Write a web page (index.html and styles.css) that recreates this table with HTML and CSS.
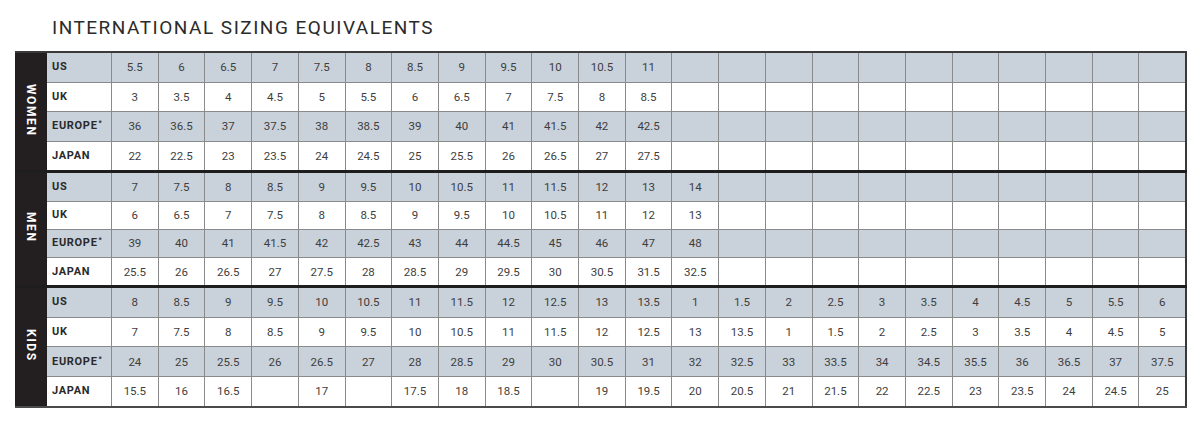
FILE: index.html
```html
<!DOCTYPE html>
<html>
<head>
<meta charset="utf-8">
<link rel="stylesheet" href="styles.css">
</head>
<body>
<h1 class="title">INTERNATIONAL SIZING EQUIVALENTS</h1>
<table class="chart">
<colgroup>
<col class="c-grp"><col class="c-lbl">
<col><col><col><col><col><col><col><col><col><col><col><col><col><col><col><col><col><col><col><col><col><col><col>
</colgroup>
<tbody class="grp women">
<tr class="g"><th class="side" rowspan="4"><span>WOMEN</span></th><th class="lbl">US</th><td>5.5</td><td>6</td><td>6.5</td><td>7</td><td>7.5</td><td>8</td><td>8.5</td><td>9</td><td>9.5</td><td>10</td><td>10.5</td><td>11</td><td></td><td></td><td></td><td></td><td></td><td></td><td></td><td></td><td></td><td></td><td></td></tr>
<tr><th class="lbl">UK</th><td>3</td><td>3.5</td><td>4</td><td>4.5</td><td>5</td><td>5.5</td><td>6</td><td>6.5</td><td>7</td><td>7.5</td><td>8</td><td>8.5</td><td></td><td></td><td></td><td></td><td></td><td></td><td></td><td></td><td></td><td></td><td></td></tr>
<tr class="g"><th class="lbl">EUROPE<sup>*</sup></th><td>36</td><td>36.5</td><td>37</td><td>37.5</td><td>38</td><td>38.5</td><td>39</td><td>40</td><td>41</td><td>41.5</td><td>42</td><td>42.5</td><td></td><td></td><td></td><td></td><td></td><td></td><td></td><td></td><td></td><td></td><td></td></tr>
<tr><th class="lbl">JAPAN</th><td>22</td><td>22.5</td><td>23</td><td>23.5</td><td>24</td><td>24.5</td><td>25</td><td>25.5</td><td>26</td><td>26.5</td><td>27</td><td>27.5</td><td></td><td></td><td></td><td></td><td></td><td></td><td></td><td></td><td></td><td></td><td></td></tr>
</tbody>
<tbody class="grp men">
<tr class="g"><th class="side" rowspan="4"><span>MEN</span></th><th class="lbl">US</th><td>7</td><td>7.5</td><td>8</td><td>8.5</td><td>9</td><td>9.5</td><td>10</td><td>10.5</td><td>11</td><td>11.5</td><td>12</td><td>13</td><td>14</td><td></td><td></td><td></td><td></td><td></td><td></td><td></td><td></td><td></td><td></td></tr>
<tr><th class="lbl">UK</th><td>6</td><td>6.5</td><td>7</td><td>7.5</td><td>8</td><td>8.5</td><td>9</td><td>9.5</td><td>10</td><td>10.5</td><td>11</td><td>12</td><td>13</td><td></td><td></td><td></td><td></td><td></td><td></td><td></td><td></td><td></td><td></td></tr>
<tr class="g"><th class="lbl">EUROPE<sup>*</sup></th><td>39</td><td>40</td><td>41</td><td>41.5</td><td>42</td><td>42.5</td><td>43</td><td>44</td><td>44.5</td><td>45</td><td>46</td><td>47</td><td>48</td><td></td><td></td><td></td><td></td><td></td><td></td><td></td><td></td><td></td><td></td></tr>
<tr><th class="lbl">JAPAN</th><td>25.5</td><td>26</td><td>26.5</td><td>27</td><td>27.5</td><td>28</td><td>28.5</td><td>29</td><td>29.5</td><td>30</td><td>30.5</td><td>31.5</td><td>32.5</td><td></td><td></td><td></td><td></td><td></td><td></td><td></td><td></td><td></td><td></td></tr>
</tbody>
<tbody class="grp kids">
<tr class="g"><th class="side" rowspan="4"><span>KIDS</span></th><th class="lbl">US</th><td>8</td><td>8.5</td><td>9</td><td>9.5</td><td>10</td><td>10.5</td><td>11</td><td>11.5</td><td>12</td><td>12.5</td><td>13</td><td>13.5</td><td>1</td><td>1.5</td><td>2</td><td>2.5</td><td>3</td><td>3.5</td><td>4</td><td>4.5</td><td>5</td><td>5.5</td><td>6</td></tr>
<tr><th class="lbl">UK</th><td>7</td><td>7.5</td><td>8</td><td>8.5</td><td>9</td><td>9.5</td><td>10</td><td>10.5</td><td>11</td><td>11.5</td><td>12</td><td>12.5</td><td>13</td><td>13.5</td><td>1</td><td>1.5</td><td>2</td><td>2.5</td><td>3</td><td>3.5</td><td>4</td><td>4.5</td><td>5</td></tr>
<tr class="g"><th class="lbl">EUROPE<sup>*</sup></th><td>24</td><td>25</td><td>25.5</td><td>26</td><td>26.5</td><td>27</td><td>28</td><td>28.5</td><td>29</td><td>30</td><td>30.5</td><td>31</td><td>32</td><td>32.5</td><td>33</td><td>33.5</td><td>34</td><td>34.5</td><td>35.5</td><td>36</td><td>36.5</td><td>37</td><td>37.5</td></tr>
<tr><th class="lbl">JAPAN</th><td>15.5</td><td>16</td><td>16.5</td><td></td><td>17</td><td></td><td>17.5</td><td>18</td><td>18.5</td><td></td><td>19</td><td>19.5</td><td>20</td><td>20.5</td><td>21</td><td>21.5</td><td>22</td><td>22.5</td><td>23</td><td>23.5</td><td>24</td><td>24.5</td><td>25</td></tr>
</tbody>
</table>
</body>
</html>
```

FILE: styles.css
```css
html, body {
  margin: 0;
  padding: 0;
  background: #ffffff;
}

body {
  font-family: Roboto, "Liberation Sans", sans-serif;
  color: #3c3c3c;
}

.title {
  margin: 0;
  padding: 17px 0 0 52px;
  height: 51px;
  box-sizing: border-box;
  font-size: 19px;
  line-height: 21px;
  font-weight: 400;
  letter-spacing: 1.5px;
  color: #2b2b2b;
}

.chart {
  margin-left: 15px;
  width: 1172px;
  table-layout: fixed;
  border-collapse: collapse;
  border-top: 2px solid #3a3a3a;
  border-right: 2px solid #3a3a3a;
  border-bottom: 2px solid #4a4a4a;
}

.c-grp { width: 31px; }
.c-lbl { width: 65px; }

.chart td,
.chart th {
  padding: 0;
  height: 28.6px;
  border: 1px solid #8a8a8a;
  font-size: 11.5px;
  line-height: 14px;
  text-align: center;
  vertical-align: middle;
  font-weight: 400;
  color: #3e3e3e;
}

.chart .men td,
.chart .men th {
  height: 27.2px;
}

.chart tr.g td,
.chart tr.g th.lbl {
  background: #c9d1da;
}

.chart th.lbl {
  text-align: left;
  padding-left: 5px;
  font-weight: 700;
  font-size: 11px;
  letter-spacing: 0.7px;
  color: #2a2a2a;
  border-left: 1px solid #2a2a2a;
}

.chart th.lbl sup {
  font-size: 7px;
  line-height: 0;
  vertical-align: 4px;
  margin-left: 1px;
}

.chart th.side {
  background: #231f20;
  border-color: #231f20;
  color: #ffffff;
  padding: 0;
}

.chart th.side span {
  display: inline-block;
  writing-mode: vertical-rl;
  font-weight: 700;
  font-size: 12px;
  letter-spacing: 1.6px;
  line-height: 14px;
}

.chart .men tr:first-child td,
.chart .men tr:first-child th,
.chart .kids tr:first-child td,
.chart .kids tr:first-child th {
  border-top: 3px solid #1e1e1e;
}
```
